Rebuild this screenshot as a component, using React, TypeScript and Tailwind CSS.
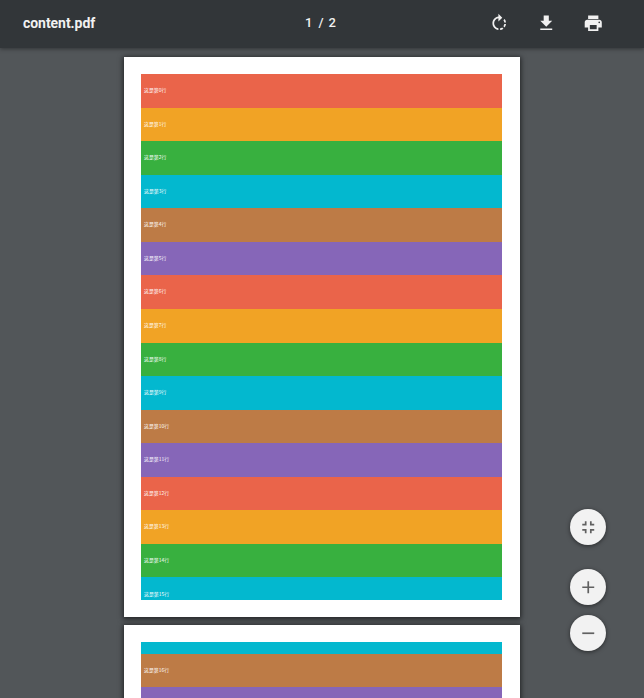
import React from "react";

const COLORS = ["bg-[#ea644a]", "bg-[#f1a325]", "bg-[#38b03f]", "bg-[#03b8cf]", "bg-[#bd7b46]", "bg-[#8666b8]"];

const ROTATE =
  "M15.55 5.55L11 1v3.07C7.06 4.56 4 7.92 4 12s3.05 7.44 7 7.93v-2.02c-2.84-.48-5-2.94-5-5.91s2.16-5.43 5-5.91V10l4.55-4.45zM19.93 11c-.17-1.39-.72-2.73-1.62-3.89l-1.42 1.42c.54.75.88 1.6 1.02 2.47h2.02zM13 17.9v2.02c1.39-.17 2.74-.71 3.9-1.61l-1.44-1.44c-.75.54-1.59.89-2.46 1.03zm3.89-2.42l1.42 1.41c.9-1.16 1.45-2.5 1.62-3.89h-2.02c-.14.87-.48 1.72-1.02 2.48z";
const DOWNLOAD = "M19 9h-4V3H9v6H5l7 7 7-7zM5 18v2h14v-2H5z";
const PRINT =
  "M19 8H5c-1.66 0-3 1.34-3 3v6h4v4h12v-4h4v-6c0-1.66-1.34-3-3-3zm-3 11H8v-5h8v5zm3-7c-.55 0-1-.45-1-1s.45-1 1-1 1 .45 1 1-.45 1-1 1zm-1-9H6v4h12V3z";
const FIT = "M5 16h3v3h2v-5H5v2zm3-8H5v2h5V5H8v3zm6 11h2v-3h3v-2h-5v5zm2-11V5h-2v5h5V8h-3z";
const ADD = "M19 13h-6v6h-2v-6H5v-2h6V5h2v6h6v2z";
const REMOVE = "M19 13H5v-2h14v2z";

function Icon({ d }: { d: string }) {
  return (
    <svg viewBox="0 0 24 24" className="size-[20.5px] shrink-0" fill="currentColor">
      <path d={d} />
    </svg>
  );
}

function Row({ index }: { index: number }) {
  return (
    <div
      className={`flex h-[33.57px] shrink-0 items-center pb-[0.5px] pl-[3px] text-[4.9px] leading-none whitespace-nowrap text-white ${COLORS[index % 6]}`}
    >
      这是第{index}行
    </div>
  );
}

function Page({ children }: { children: React.ReactNode }) {
  return (
    <section className="h-[560px] w-[396px] shrink-0 bg-white pt-[17px] pr-[18px] pl-[17px] shadow-[0_1px_5px_1px_rgba(0,0,0,0.6)]">
      {children}
    </section>
  );
}

function RoundButton({ d, label }: { d: string; label: string }) {
  return (
    <button
      aria-label={label}
      className="flex size-9 items-center justify-center rounded-full bg-[#f2f2f2] pr-[0.5px] pb-[0.5px] text-[#616161] shadow-[0_1px_4px_rgba(0,0,0,0.5)]"
    >
      <Icon d={d} />
    </button>
  );
}

export default function App() {
  return (
    <div className="relative flex h-[698px] w-[644px] flex-col overflow-hidden bg-[#525659] font-['Noto_Sans_CJK_SC',sans-serif]">
      <header className="z-10 grid h-12 shrink-0 grid-cols-3 items-center bg-[#323639] font-[Roboto,sans-serif] text-[#f1f1f1] shadow-[0_1px_4px_rgba(0,0,0,0.4)]">
        <h1 className="pb-0.5 pl-[23px] text-[14px] leading-none font-bold tracking-[-0.05px]">content.pdf</h1>
        <div className="flex justify-center pr-[3px] pb-[3px] text-[13px] leading-none font-medium">
          <span>1</span>
          <span className="ml-1.5">/</span>
          <span className="ml-[5px]">2</span>
        </div>
        <div className="flex justify-end gap-[26.5px] pr-[41px] pb-0.5">
          <Icon d={ROTATE} />
          <Icon d={DOWNLOAD} />
          <Icon d={PRINT} />
        </div>
      </header>
      <main className="flex min-h-0 flex-1 flex-col items-center gap-2 pt-[9px]">
        <Page>
          <div className="flex h-[526px] flex-col overflow-hidden">
            {Array.from({ length: 16 }, (_, i) => (
              <Row key={i} index={i} />
            ))}
          </div>
        </Page>
        <Page>
          <div className="h-[11.5px] bg-[#03b8cf]" />
          <Row index={16} />
          <div className="h-[33.57px] bg-[#8666b8]" />
        </Page>
      </main>
      <div className="absolute top-[509px] left-[570px] z-10 flex flex-col">
        <RoundButton d={FIT} label="Fit to page" />
        <div className="mt-6 flex flex-col gap-2.5">
          <RoundButton d={ADD} label="Zoom in" />
          <RoundButton d={REMOVE} label="Zoom out" />
        </div>
      </div>
    </div>
  );
}
